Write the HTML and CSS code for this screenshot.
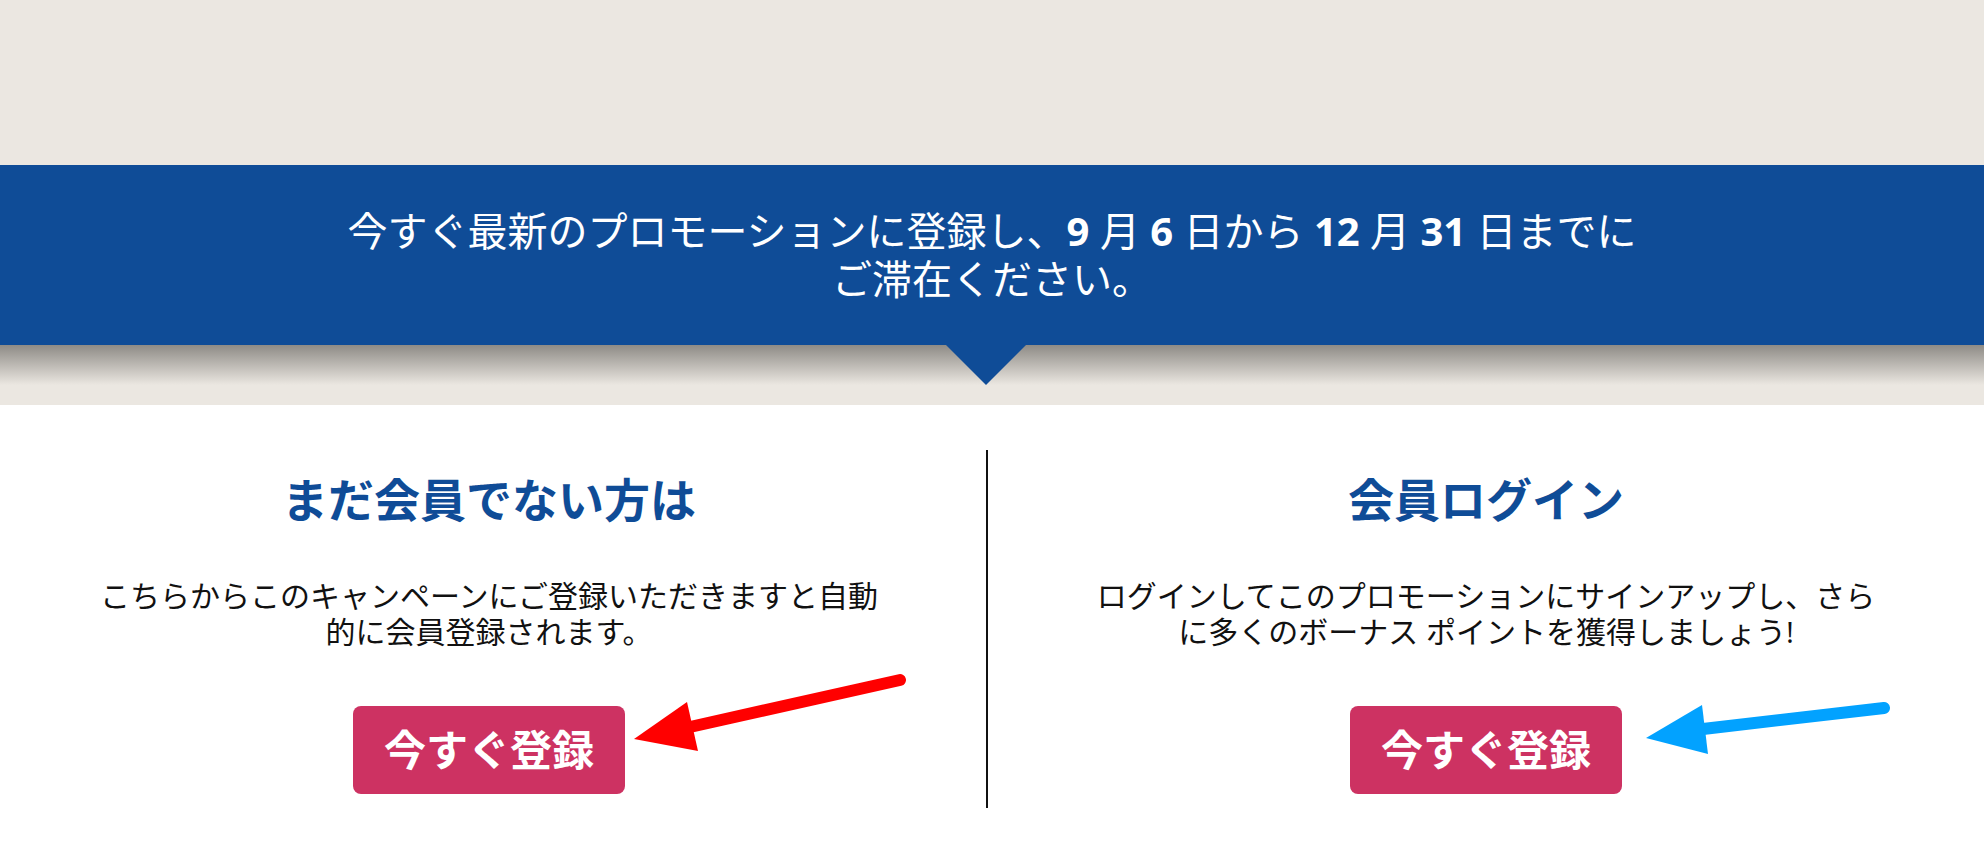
FILE: index.html
```html
<!DOCTYPE html>
<html lang="ja">
  <head>
    <meta charset="UTF-8" />
    <meta name="viewport" content="width=device-width, initial-scale=1.0" />
    <title>プロモーション登録</title>
    <link rel="stylesheet" href="styles.css">
  </head>
  <body>
    <div class="hero"></div>

    <!-- Promotion banner -->
    <div class="promo-banner">
      <p>今すぐ最新のプロモーションに登録し、<b>9</b> 月 <b>6</b> 日から <b>12</b> 月 <b>31</b> 日までに<br>ご滞在ください。</p>
    </div>
    <div class="banner-shade"></div>

    <div class="signup">
      <div class="signup-col signup-col-left">
        <h2>まだ会員でない方は</h2>
        <p>こちらからこのキャンペーンにご登録いただきますと自動的に会員登録されます。</p>
        <a href="#" class="btn-register">今すぐ登録</a>
      </div>
      <div class="signup-divider"></div>
      <div class="signup-col signup-col-right">
        <h2>会員ログイン</h2>
        <p>ログインしてこのプロモーションにサインアップし、さらに多くのボーナス ポイントを獲得しましょう!</p>
        <a href="#" class="btn-register">今すぐ登録</a>
      </div>
    </div>

    <!-- Annotation arrows drawn over the page -->
    <svg class="annotations" width="1984" height="844" viewBox="0 0 1984 844">
      <line x1="690" y1="727" x2="900" y2="680" stroke="#ff0000" stroke-width="12" stroke-linecap="round" />
      <polygon points="634,739 687,702 698,751" fill="#ff0000" />
      <line x1="1703" y1="729" x2="1884" y2="708" stroke="#02a2ff" stroke-width="12" stroke-linecap="round" />
      <polygon points="1646,738 1702,705 1708,754" fill="#02a2ff" />
    </svg>
  </body>
</html>
```

FILE: styles.css
```css
/* Basic reset */
body,
html {
  margin: 0;
  padding: 0;
  font-family: "Open Sans", "Noto Sans CJK JP", sans-serif;
  background-color: #ffffff;
  color: #111111;
}

body {
  position: relative;
  overflow: hidden;
}

/* Beige area above the banner */
.hero {
  height: 165px;
  background-color: #ebe7e1;
}

/* Blue promotion banner */
.promo-banner {
  position: relative;
  height: 180px;
  background-color: #0f4c97;
  display: flex;
  justify-content: center;
  align-items: center;
  color: #ffffff;
}

.promo-banner p {
  margin: 0;
  font-size: 40px;
  line-height: 48px;
  text-align: center;
}

.promo-banner b {
  font-weight: 700;
}

/* Little pointer under the banner */
.promo-banner::after {
  content: "";
  position: absolute;
  top: 100%;
  left: 946px;
  border-left: 40px solid transparent;
  border-right: 40px solid transparent;
  border-top: 40px solid #0f4c97;
  z-index: 2;
}

.banner-shade {
  height: 60px;
  background: linear-gradient(#8e8b86 0, #ebe7e1 40px, #ebe7e1 100%);
}

/* Two columns: sign up / log in */
.signup {
  display: flex;
  align-items: flex-start;
  padding-top: 45px;
}

.signup-col {
  text-align: center;
  padding-top: 22px;
}

.signup-col-left {
  flex: 0 0 978px;
  margin-right: 8px;
}

.signup-col-right {
  flex: 1;
}

.signup-divider {
  flex: 0 0 2px;
  height: 358px;
  background-color: #111111;
}

.signup-col h2 {
  margin: 0;
  font-size: 46px;
  line-height: 54px;
  font-weight: 700;
  color: #0f4c97;
}

.signup-col p {
  max-width: 800px;
  margin: 52px auto 0;
  font-size: 30px;
  line-height: 36px;
}

.btn-register {
  display: inline-block;
  margin-top: 56px;
  padding: 20px 31px;
  font-size: 42px;
  line-height: 48px;
  font-weight: 700;
  color: #ffffff;
  text-decoration: none;
  background-color: #cd3262;
  border-radius: 8px;
}

.annotations {
  position: absolute;
  top: 0;
  left: 0;
  pointer-events: none;
}
```
